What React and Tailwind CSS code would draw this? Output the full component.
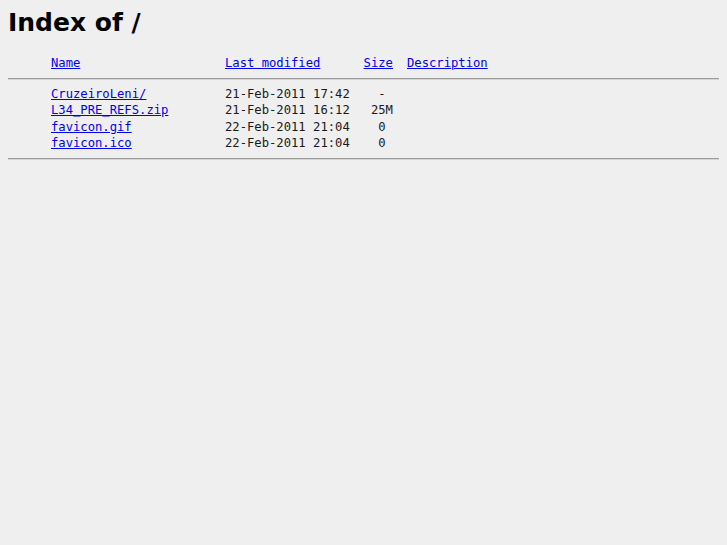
import React from "react";

const files = [
  { name: "CruzeiroLeni/", date: "21-Feb-2011 17:42", size: "  - " },
  { name: "L34_PRE_REFS.zip", date: "21-Feb-2011 16:12", size: " 25M" },
  { name: "favicon.gif", date: "22-Feb-2011 21:04", size: "  0 " },
  { name: "favicon.ico", date: "22-Feb-2011 21:04", size: "  0 " },
];

const Rule = () => (
  <div className="h-0 border-t border-b border-t-[#9c9c9c] border-b-[#d6d6d6]" />
);

const App = () => {
  return (
    <div className="min-h-[545px] bg-[#efefef] px-2 pt-[8px] text-[#1a1a1a]">
      {/* HEADING */}
      <h1 className="font-['DejaVu_Sans',sans-serif] text-[25px] font-bold leading-[29px] text-black">
        Index of /
      </h1>

      <div className="mt-[17px] font-['DejaVu_Sans_Mono',monospace] text-[12.2px] leading-[16px]">
        {/* COLUMN HEADERS */}
        <div className="grid h-[17px] grid-cols-[43px_174px_138.6px_29.4px_auto] items-end">
          <span />
          <a href="#" className="text-[#0000ee] underline">Name</a>
          <a href="#" className="text-[#0000ee] underline">Last modified</a>
          <a href="#" className="text-[#0000ee] underline whitespace-pre">Size</a>
          <a href="#" className="ml-[14px] text-[#0000ee] underline">Description</a>
        </div>

        <div className="mt-[7px] mb-[6px]">
          <Rule />
        </div>

        {/* FILE ROWS */}
        <div className="flex flex-col">
          {files.map((f) => (
            <div
              key={f.name}
              className="grid h-[16.33px] grid-cols-[43px_174px_138.6px_29.4px_auto]"
            >
              <span />
              <a href="#" className="text-[#0000ee] underline">{f.name}</a>
              <span className="whitespace-pre">{f.date}</span>
              <span className="whitespace-pre">{f.size}</span>
              <span />
            </div>
          ))}
        </div>

        <div className="mt-[7px]">
          <Rule />
        </div>
      </div>
    </div>
  );
};

export default App;
